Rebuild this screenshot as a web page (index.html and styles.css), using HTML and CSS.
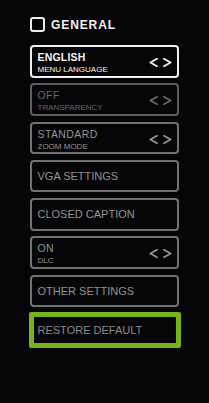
FILE: index.html
```html
<!DOCTYPE html>
<html>
<head>
<meta charset="utf-8">
<link rel="stylesheet" href="styles.css">
</head>
<body>
<div class="page">
  <div class="header">
    <span class="checkbox"></span>
    <span class="title">GENERAL</span>
  </div>
  <div class="menu">
    <div class="item item--active">
      <div class="item-text"><span class="value">ENGLISH</span><span class="label">MENU LANGUAGE</span></div>
      <svg class="arrows" viewBox="0 0 23 9"><polyline points="8,0.8 1.4,4.5 8,8.2"/><polyline points="15,0.8 21.6,4.5 15,8.2"/></svg>
    </div>
    <div class="item item--dim">
      <div class="item-text"><span class="value">OFF</span><span class="label">TRANSPARENCY</span></div>
      <svg class="arrows" viewBox="0 0 23 9"><polyline points="8,0.8 1.4,4.5 8,8.2"/><polyline points="15,0.8 21.6,4.5 15,8.2"/></svg>
    </div>
    <div class="item">
      <div class="item-text"><span class="value">STANDARD</span><span class="label">ZOOM MODE</span></div>
      <svg class="arrows" viewBox="0 0 23 9"><polyline points="8,0.8 1.4,4.5 8,8.2"/><polyline points="15,0.8 21.6,4.5 15,8.2"/></svg>
    </div>
    <div class="item item--single">
      <span class="single">VGA SETTINGS</span>
    </div>
    <div class="item item--single">
      <span class="single">CLOSED CAPTION</span>
    </div>
    <div class="item">
      <div class="item-text"><span class="value">ON</span><span class="label">DLC</span></div>
      <svg class="arrows" viewBox="0 0 23 9"><polyline points="8,0.8 1.4,4.5 8,8.2"/><polyline points="15,0.8 21.6,4.5 15,8.2"/></svg>
    </div>
    <div class="item item--single">
      <span class="single">OTHER SETTINGS</span>
    </div>
    <div class="item item--single item--focus">
      <span class="single">RESTORE DEFAULT</span>
    </div>
  </div>
</div>
</body>
</html>
```
FILE: styles.css
```css
html, body {
  margin: 0;
  padding: 0;
  background: #060608;
  height: 100%;
}
body {
  font-family: "Liberation Sans", Arial, sans-serif;
  color: #8c8c8c;
}
.page {
  padding: 17px 0 0 30px;
  width: 149px;
}
.header {
  display: flex;
  align-items: center;
  gap: 6px;
  height: 15px;
  margin-bottom: 13px;
}
.checkbox {
  box-sizing: border-box;
  width: 15px;
  height: 15px;
  border: 2px solid #ededed;
  border-radius: 3px;
}
.title {
  color: #f2f2f2;
  font-weight: bold;
  font-size: 12px;
  letter-spacing: 0.9px;
  line-height: 15px;
  padding-top: 1px;
}
.menu {
  display: flex;
  flex-direction: column;
  gap: 5.8px;
}
.item {
  box-sizing: border-box;
  height: 32.5px;
  border: 2px solid #727272;
  border-radius: 4px;
  display: flex;
  align-items: flex-start;
  justify-content: space-between;
  padding: 5px 5px 0 5.5px;
  color: #939393;
}
.item-text {
  display: flex;
  flex-direction: column;
}
.value {
  font-size: 10.5px;
  line-height: 11px;
  letter-spacing: 0.4px;
  white-space: nowrap;
}
.label {
  font-size: 8px;
  line-height: 9px;
  margin-top: 2px;
  white-space: nowrap;
}
.arrows {
  width: 23px;
  height: 9px;
  margin-top: 6px;
  fill: none;
  stroke: currentColor;
  stroke-width: 1.8;
  stroke-linecap: round;
  stroke-linejoin: round;
}
.item--active {
  border-color: #f0f0f0;
  color: #f4f4f4;
}
.item--active .value {
  font-weight: bold;
  letter-spacing: 0.2px;
}
.item--dim {
  border-color: #5e5e5e;
  color: #676767;
}
.item--single {
  align-items: center;
  padding-top: 0;
}
.single {
  font-size: 11px;
  line-height: 12px;
  white-space: nowrap;
}
.item--focus {
  height: 36px;
  margin: -1px -2px 0 -1px;
  border: 5px solid #79b31b;
  border-radius: 2px;
  padding-left: 3.5px;
  color: #8a8a8a;
}
```
